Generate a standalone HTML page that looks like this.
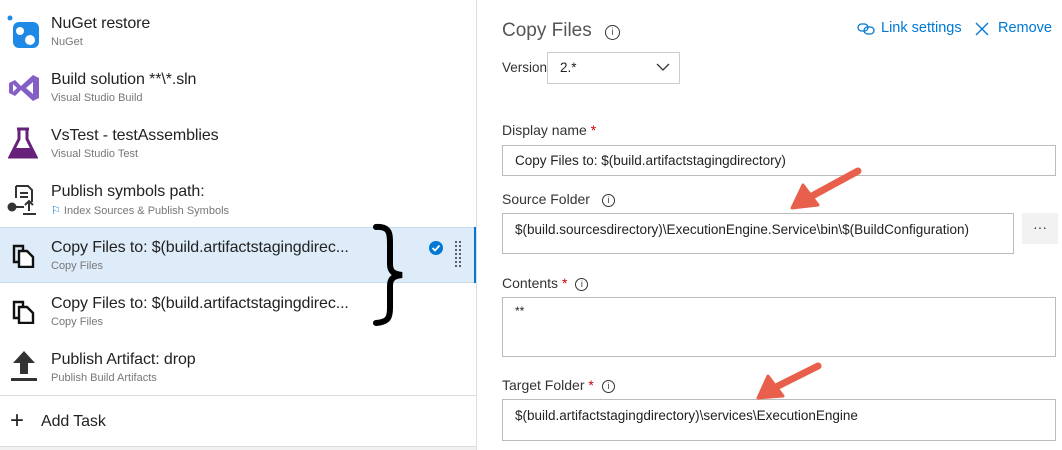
<!DOCTYPE html>
<html><head><meta charset="utf-8"><style>
*{box-sizing:border-box;margin:0;padding:0}
body{width:1062px;height:450px;background:#fff;font-family:"Liberation Sans",sans-serif;position:relative;overflow:hidden;color:#333}
.a{position:absolute}
.t{font-size:16px;color:#222;letter-spacing:-0.1px}
.s{font-size:11px;color:#777}
.lbl{font-size:14px;color:#333}
.inp{border:1px solid #bbb;background:#fff;font-size:13.5px;color:#222;padding-left:12px}
.req{color:#c00}
.info{display:inline-block;width:13px;height:13px;border:1px solid #333;border-radius:50%;font-size:9px;text-align:center;line-height:11px;margin-left:8px;vertical-align:1px}
</style></head><body>
<div class="a" style="left:476px;top:0;width:1px;height:450px;background:#ddd"></div>
<div class="a" style="left:0;top:227px;width:476px;height:56px;background:#deecf9;border-top:1px solid #c7dcf0;border-bottom:1px solid #c7dcf0"></div>
<div class="a" style="left:474px;top:227px;width:2px;height:56px;background:#0078d4"></div>
<div class="a" style="left:0;top:395px;width:476px;height:1px;background:#ddd"></div>
<div class="a" style="left:0;top:446px;width:476px;height:4px;background:#f0f0f0;border-top:1px solid #ddd"></div>

<svg class="a" style="left:6px;top:15px" width="34" height="34"><circle cx="4" cy="3" r="2.5" fill="#1e8ae6"/><rect x="7" y="7" width="26" height="26" rx="6" fill="#1e8ae6"/><circle cx="14" cy="16" r="4" fill="#fff"/><circle cx="24" cy="25" r="5" fill="#fff"/></svg>
<svg class="a" style="left:7px;top:71px" width="34" height="34"><path d="M2 12 L8 9 L14 15 L26 4 L32 7 L32 27 L26 30 L14 19 L8 25 L2 22Z" fill="#865fc5"/><path d="M6 13 L6 21 L10 17Z M26 11 L26 23 L19 17Z" fill="#fff"/></svg>
<svg class="a" style="left:8px;top:127px" width="30" height="34"><path d="M9 2 H21 M11 2 V12 L2 30 H28 L19 12 V2" fill="none" stroke="#68217a" stroke-width="3"/><path d="M6 21 H24 L28 30 H2Z" fill="#68217a"/></svg>
<svg class="a" style="left:6px;top:184px" width="34" height="34"><path d="M10 2 H22 L26 6 V18 M10 2 V14" fill="none" stroke="#333" stroke-width="2"/><path d="M14 9 H22 M14 13 H22" stroke="#333" stroke-width="2"/><circle cx="6" cy="23" r="4.5" fill="#333"/><path d="M10 23 H18 M23 27 V17 M19 21 L23 17 L27 21 M17 30 H30" stroke="#333" stroke-width="2" fill="none"/></svg>
<svg class="a" style="left:12px;top:244px" width="24" height="24"><path d="M2 2 H11 V18 H2Z" fill="none" stroke="#111" stroke-width="2.4"/><path d="M7 7 H15 L21 13 V23 H7Z" fill="#fff" stroke="#111" stroke-width="2.4"/></svg>
<svg class="a" style="left:12px;top:300px" width="24" height="24"><path d="M2 2 H11 V18 H2Z" fill="none" stroke="#111" stroke-width="2.4"/><path d="M7 7 H15 L21 13 V23 H7Z" fill="#fff" stroke="#111" stroke-width="2.4"/></svg>
<svg class="a" style="left:10px;top:350px" width="28" height="32"><path d="M14 1 L25 13 H18 V24 H10 V13 H3Z" fill="#333"/><rect x="1" y="28" width="26" height="3" fill="#333"/></svg>

<div class="a t" style="left:51px;top:15px">NuGet restore</div><div class="a s" style="left:51px;top:36px">NuGet</div>
<div class="a t" style="left:51px;top:71px">Build solution **\*.sln</div><div class="a s" style="left:51px;top:92px">Visual Studio Build</div>
<div class="a t" style="left:51px;top:127px">VsTest - testAssemblies</div><div class="a s" style="left:51px;top:148px">Visual Studio Test</div>
<div class="a t" style="left:51px;top:183px">Publish symbols path:</div><div class="a s" style="left:51px;top:204px"><span style="color:#0078d4">⚐</span> Index Sources &amp; Publish Symbols</div>
<div class="a t" style="left:51px;top:239px">Copy Files to: $(build.artifactstagingdirec...</div><div class="a s" style="left:51px;top:260px">Copy Files</div>
<div class="a t" style="left:51px;top:295px">Copy Files to: $(build.artifactstagingdirec...</div><div class="a s" style="left:51px;top:316px">Copy Files</div>
<div class="a t" style="left:51px;top:351px">Publish Artifact: drop</div><div class="a s" style="left:51px;top:372px">Publish Build Artifacts</div>
<div class="a" style="left:10px;top:409px;font-size:24px;line-height:24px;color:#222">+</div>
<div class="a t" style="left:41px;top:413px">Add Task</div>
<svg class="a" style="left:429px;top:241px" width="14" height="14"><circle cx="7" cy="7" r="7" fill="#0078d4"/><path d="M3.5 7 L6 9.5 L10.5 4.5" stroke="#fff" stroke-width="1.8" fill="none"/></svg>
<svg class="a" style="left:454px;top:240px" width="8" height="28"><g fill="#333"><circle cx="2" cy="2" r="1"/><circle cx="6" cy="2" r="1"/><circle cx="2" cy="6" r="1"/><circle cx="6" cy="6" r="1"/><circle cx="2" cy="10" r="1"/><circle cx="6" cy="10" r="1"/><circle cx="2" cy="14" r="1"/><circle cx="6" cy="14" r="1"/><circle cx="2" cy="18" r="1"/><circle cx="6" cy="18" r="1"/><circle cx="2" cy="22" r="1"/><circle cx="6" cy="22" r="1"/><circle cx="2" cy="26" r="1"/><circle cx="6" cy="26" r="1"/></g></svg>
<svg class="a" style="left:368px;top:222px" width="44" height="106"><path d="M8 5 C22 4 22 12 22 22 L22 42 C22 50 26 52 34 53 C26 54 22 56 22 64 L22 86 C22 96 20 100 8 101" fill="none" stroke="#000" stroke-width="6" stroke-linecap="round"/></svg>

<div class="a" style="left:502px;top:20px;font-size:19px;color:#555">Copy Files <span class="info" style="width:15px;height:15px;line-height:13px;font-size:10px">i</span></div>
<svg class="a" style="left:857px;top:23px" width="18" height="12"><rect x="1" y="1" width="10" height="7" rx="3.5" fill="none" stroke="#0078d4" stroke-width="1.3"/><rect x="7" y="4" width="10" height="7" rx="3.5" fill="none" stroke="#0078d4" stroke-width="1.3"/></svg>
<div class="a" style="left:881px;top:20px;font-size:14.5px;color:#0078d4">Link settings</div>
<svg class="a" style="left:975px;top:22px" width="14" height="14"><path d="M1 1 L13 13 M13 1 L1 13" stroke="#0078d4" stroke-width="1.3"/></svg>
<div class="a" style="left:998px;top:20px;font-size:14.5px;color:#0078d4">Remove</div>
<div class="a lbl" style="left:502px;top:60px;font-size:13.5px">Version</div>
<div class="a inp" style="left:547px;top:52px;width:133px;height:32px;border-color:#ccc;line-height:30px">2.*</div>
<svg class="a" style="left:656px;top:63px" width="14" height="9"><path d="M1 1 L7 7 L13 1" stroke="#333" fill="none" stroke-width="1.3"/></svg>
<div class="a lbl" style="left:502px;top:122px">Display name <span class="req">*</span></div>
<div class="a inp" style="left:502px;top:145px;width:554px;height:31px;line-height:29px">Copy Files to: $(build.artifactstagingdirectory)</div>
<div class="a lbl" style="left:502px;top:191px">Source Folder <span class="info">i</span></div>
<div class="a inp" style="left:502px;top:213px;width:512px;height:41px;line-height:32px">$(build.sourcesdirectory)\ExecutionEngine.Service\bin\$(BuildConfiguration)</div>
<div class="a" style="left:1022px;top:213px;width:36px;height:31px;background:#f2f2f2;text-align:center;line-height:28px;color:#333;font-size:14px">···</div>
<div class="a lbl" style="left:502px;top:275px">Contents <span class="req">*</span><span class="info">i</span></div>
<div class="a inp" style="left:502px;top:297px;width:554px;height:60px;padding-top:6px;font-size:12px">**</div>
<div class="a lbl" style="left:502px;top:377px">Target Folder <span class="req">*</span><span class="info">i</span></div>
<div class="a inp" style="left:502px;top:399px;width:554px;height:42px;line-height:32px">$(build.artifactstagingdirectory)\services\ExecutionEngine</div>

<svg class="a" style="left:0;top:0" width="1062" height="450">
<g stroke="#e8604c" stroke-width="7" stroke-linecap="round" fill="#e8604c">
<line x1="858" y1="171" x2="812" y2="196"/><path d="M792 208 L803 185 L818 205Z" stroke-width="3" stroke-linejoin="round"/>
<line x1="818" y1="366" x2="778" y2="386"/><path d="M758 398 L768 376 L783 396Z" stroke-width="3" stroke-linejoin="round"/>
</g></svg>
</body></html>
